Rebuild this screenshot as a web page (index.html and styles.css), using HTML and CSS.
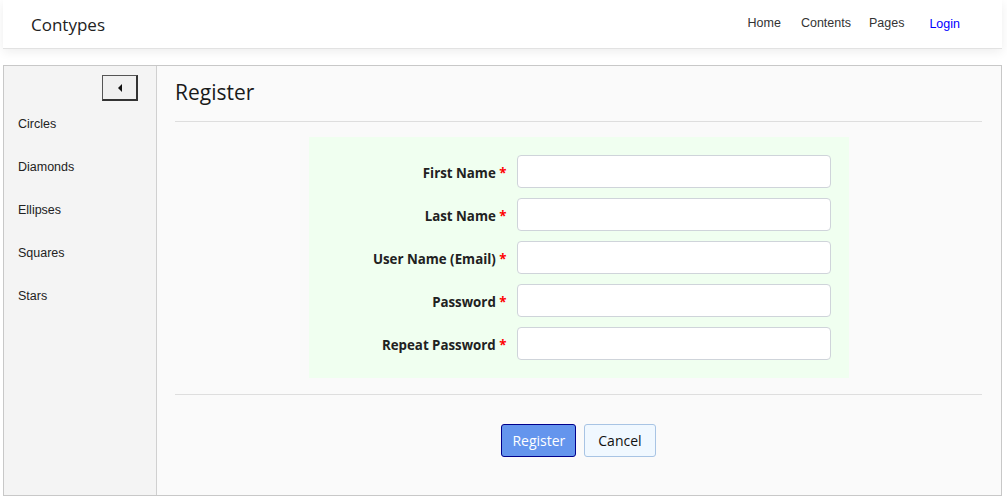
FILE: index.html
```html
<!DOCTYPE html>
<html>
<head>
<meta charset="utf-8">
<link rel="stylesheet" href="styles.css">
</head>
<body>
<header class="topbar">
  <div class="brand">Contypes</div>
  <nav class="nav">
    <a class="nav-link home">Home</a>
    <a class="nav-link contents">Contents</a>
    <a class="nav-link pages">Pages</a>
    <a class="nav-link login">Login</a>
  </nav>
</header>
<main class="shell">
  <aside class="sidebar">
    <div class="toggle-row"><button class="toggle"><span class="tri"></span></button></div>
    <ul class="side-list">
      <li>Circles</li>
      <li>Diamonds</li>
      <li>Ellipses</li>
      <li>Squares</li>
      <li>Stars</li>
    </ul>
  </aside>
  <section class="content">
    <h1 class="title">Register</h1>
    <hr class="rule">
    <div class="form-box">
      <label class="lbl">First Name <span class="req">*</span></label><input class="inp" type="text">
      <label class="lbl">Last Name <span class="req">*</span></label><input class="inp" type="text">
      <label class="lbl">User Name (Email) <span class="req">*</span></label><input class="inp" type="text">
      <label class="lbl">Password <span class="req">*</span></label><input class="inp" type="password">
      <label class="lbl">Repeat Password <span class="req">*</span></label><input class="inp" type="password">
    </div>
    <hr class="rule rule-low">
    <div class="actions">
      <button class="btn btn-primary">Register</button>
      <button class="btn btn-cancel">Cancel</button>
    </div>
  </section>
</main>
</body>
</html>
```
FILE: styles.css
```css
html, body { margin: 0; padding: 0; background: #ffffff; }
body { padding: 0 5px 0 3px; font-family: "Open Sans", "Noto Sans", sans-serif; color: #212529; }

.topbar {
  height: 48px;
  background: #fff;
  border-bottom: 1px solid #e2e2e2;
  box-shadow: 0 3px 10px rgba(0,0,0,0.07);
  display: flex;
  align-items: center;
  justify-content: space-between;
  padding: 0 42px 0 28px;
  position: relative;
}
.brand { font-size: 17px; color: #222; letter-spacing: 0; }
.nav { display: flex; align-items: center; font-family: "Liberation Sans", Arial, sans-serif; font-size: 12.5px; margin-top: -2px; }
.nav-link { color: #333; }
.nav-link.contents { margin-left: 20px; }
.nav-link.pages { margin-left: 18px; }
.nav-link.login { color: #0000ff; margin-left: 25px; margin-top: 1px; }

.shell {
  margin-top: 16px;
  height: 429px;
  border: 1px solid #c8c8c8;
  display: flex;
  background: #fafafa;
}
.sidebar {
  width: 152px;
  background: #f4f4f4;
  border-right: 1px solid #d0d0d0;
  font-family: "Liberation Sans", Arial, sans-serif;
  font-size: 12.5px;
  color: #222;
}
.toggle-row { display: flex; justify-content: flex-end; padding: 9px 18px 0 0; }
.toggle {
  width: 36px; height: 26px;
  background: #f0f0f0;
  border: 1px solid #555;
  border-right: 2px solid #333;
  border-bottom: 2px solid #333;
  padding: 0;
  display: flex; align-items: center; justify-content: center;
}
.tri {
  width: 0; height: 0;
  border-top: 4px solid transparent;
  border-bottom: 4px solid transparent;
  border-right: 4px solid #111;
}
.side-list { list-style: none; margin: 0; padding: 0 0 0 14px; }
.side-list li { height: 43px; line-height: 43px; }
.side-list li:first-child { margin-top: 2px; }

.content { flex: 1; padding: 0 19px 0 18px; }
.title { font-size: 21px; font-weight: normal; margin: 11px 0 0 0; height: 30px; line-height: 30px; color: #1a1a1a; }
.rule { border: 0; border-top: 1px solid #dedede; margin: 14px 0 0 0; }
.form-box {
  width: 504px;
  margin: 15px auto 0 auto;
  background: #f0fff0;
  padding: 18px;
  display: grid;
  grid-template-columns: 180px 314px;
  column-gap: 10px;
  row-gap: 10px;
  align-items: center;
}
.lbl { text-align: right; font-size: 13.3px; font-weight: bold; color: #212121; padding-top: 2px; }
.req { color: #ff0000; }
.inp {
  box-sizing: border-box;
  height: 33px; width: 314px;
  border: 1px solid #cfd4da;
  border-radius: 4px;
  background: #fff;
  margin: 0;
}
.rule-low { margin-top: 16px; }
.actions { display: flex; justify-content: center; gap: 8px; margin-top: 29px; }
.btn {
  height: 33px;
  font-family: "Open Sans", "Noto Sans", sans-serif;
  font-size: 14px;
  border-radius: 3px;
  padding: 0 10px;
  margin: 0;
}
.btn-primary { background: #6495ed; color: #fff; border: 1px solid #00008b; }
.btn-cancel { background: #f0f8ff; color: #111; border: 1px solid #a8c4e4; padding: 0 13px; }
```
